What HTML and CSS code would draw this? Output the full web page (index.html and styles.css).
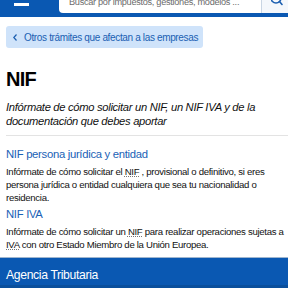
FILE: index.html
```html
<!DOCTYPE html>
<html lang="es">
<head>
<meta charset="utf-8">
<title>NIF</title>
<link rel="stylesheet" href="styles.css">
</head>
<body>
<header class="topbar">
  <div class="menu">
    <svg width="16" height="17" viewBox="0 0 16 17"><rect x="0" y="-6" width="15" height="3" fill="#fff"/><rect x="0" y="3" width="15" height="3" fill="#fff"/></svg>
  </div>
  <div class="search">
    <div class="search-field"><span class="placeholder">Buscar por impuestos, gestiones, modelos ...</span></div>
    <div class="search-btn">
      <svg width="12" height="13" viewBox="0 0 12 13"><circle cx="5" cy="-2" r="5" fill="none" stroke="#1c5fb0" stroke-width="1.6"/><line x1="8.5" y1="1.5" x2="11" y2="4.5" stroke="#1c5fb0" stroke-width="1.6" stroke-linecap="round"/></svg>
    </div>
  </div>
</header>
<main class="content">
  <a class="back" href="#">
    <svg width="4" height="7" viewBox="0 0 4 7"><polyline points="3.5,0.5 0.8,3.5 3.5,6.5" fill="none" stroke="#1c5fb0" stroke-width="1.2"/></svg>
    <span>Otros trámites que afectan a las empresas</span>
  </a>
  <h1 class="title">NIF</h1>
  <p class="lead">Infórmate de cómo solicitar un NIF, un NIF IVA y de la documentación que debes aportar</p>
  <section class="item first">
    <h2 class="item-title"><a href="#">NIF persona jurídica y entidad</a></h2>
    <p class="item-text">Infórmate de cómo solicitar el <abbr>NIF</abbr> , provisional o definitivo, si eres persona jurídica o entidad cualquiera que sea tu nacionalidad o residencia.</p>
  </section>
  <section class="item">
    <h2 class="item-title"><a href="#">NIF IVA</a></h2>
    <p class="item-text">Infórmate de cómo solicitar un <abbr>NIF</abbr> para realizar operaciones sujetas a <abbr>IVA</abbr> con otro Estado Miembro de la Unión Europea.</p>
  </section>
</main>
<footer class="footer">
  <div class="footer-title">Agencia Tributaria</div>
  <div class="footer-strip"></div>
</footer>
</body>
</html>
```
FILE: styles.css
```css
html, body {
  margin: 0;
  padding: 0;
  background: #fff;
}
body {
  font-family: "Liberation Sans", Arial, sans-serif;
  color: #111;
  overflow: hidden;
}
.topbar {
  height: 17px;
  background: #0a58b2;
  display: flex;
  align-items: flex-start;
  overflow: hidden;
}
.menu {
  width: 59px;
  flex: none;
  padding-left: 14px;
  box-sizing: border-box;
  line-height: 0;
}
.search {
  flex: 1;
  display: flex;
  height: 13px;
}
.search-field {
  flex: 1;
  background: #fff;
  border-bottom-left-radius: 4px;
  overflow: hidden;
  padding-left: 10px;
}
.placeholder {
  display: block;
  font-size: 9.2px;
  letter-spacing: -0.3px;
  line-height: 12px;
  margin-top: -4px;
  color: #6b6b6b;
  white-space: nowrap;
}
.search-btn {
  width: 27px;
  flex: none;
  background: #f4f7fb;
  border-left: 1px solid #c9d5e3;
  box-sizing: border-box;
  padding-left: 9px;
  line-height: 0;
}
.content {
  padding: 0 0 0 6px;
}
.back {
  margin-top: 9px;
  display: inline-flex;
  align-items: center;
  height: 22px;
  box-sizing: border-box;
  padding: 0 5px 0 7px;
  gap: 7px;
  background: #cfe3fa;
  border-radius: 3px;
  color: #1a5fb2;
  text-decoration: none;
  font-size: 10px;
  letter-spacing: -0.35px;
}
.title {
  margin: 20px 0 0;
  font-size: 20px;
  letter-spacing: -0.8px;
  line-height: 22px;
  font-weight: bold;
  color: #000;
}
.lead {
  margin: 10px 0 0;
  font-size: 11.2px;
  letter-spacing: -0.3px;
  line-height: 14px;
  font-style: italic;
  color: #111;
  padding-bottom: 7px;
  border-bottom: 1px solid #e3e3e3;
}
.item-title {
  margin: 0;
  font-size: 11.3px;
  letter-spacing: -0.3px;
  line-height: 14px;
  font-weight: normal;
}
.item-title a {
  color: #1a62b6;
  text-decoration: none;
}
.item.first {
  padding-top: 11px;
}
.item-text {
  margin: 4px 0 0;
  font-size: 9.6px;
  letter-spacing: -0.3px;
  line-height: 13px;
}
.item + .item {
  margin-top: 3px;
}
abbr {
  text-decoration: underline dotted #777;
  text-underline-offset: 1px;
}
.footer {
  margin-top: 6px;
  background: #0a58b2;
  border-top: 1px solid #9fb6cf;
  color: #fff;
  height: 40px;
}
.footer-title {
  padding: 10px 0 0 6px;
  font-size: 12.2px;
  letter-spacing: -0.35px;
  line-height: 14px;
}
.footer-strip {
  margin-top: 3px;
  height: 5px;
  background: #0a4f9c;
}
```
